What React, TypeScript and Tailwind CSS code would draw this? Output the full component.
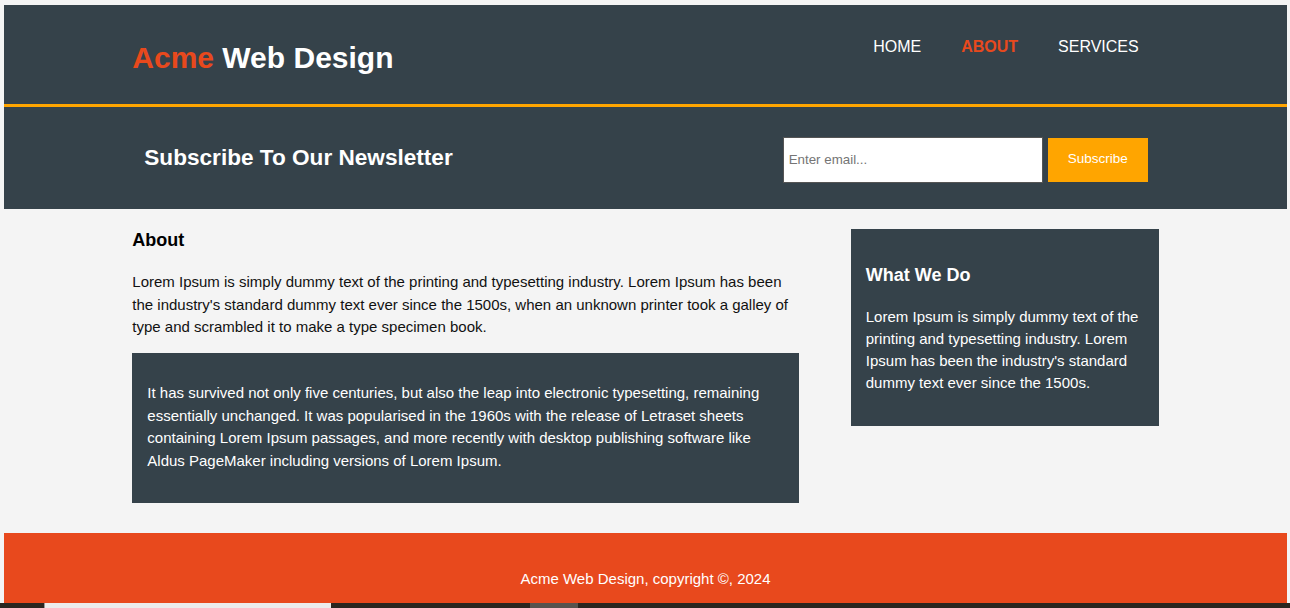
import React from "react";

const navItems = [
  { label: "HOME", active: false },
  { label: "ABOUT", active: true },
  { label: "SERVICES", active: false },
];

const App: React.FC = () => {
  return (
    <div className="h-[608px] w-full overflow-hidden bg-[#f4f4f4] flex flex-col font-['Liberation_Sans',Arial,sans-serif]">
      <div className="flex-1 flex flex-col ml-[4px] mr-[3px] mt-[5px]">
        {/* header */}
        <header className="h-[102px] shrink-0 bg-[#35424a] border-b-[3px] border-[#ffa500]">
          <div className="w-[80%] mx-auto flex justify-between items-start">
            <h1 className="mt-[35px] text-[30px] font-bold leading-[35px] text-white">
              <span className="text-[#e8491d]">Acme</span> Web Design
            </h1>
            <nav className="mt-[33px] flex">
              {navItems.map((item) => (
                <a
                  key={item.label}
                  href="#"
                  className={
                    item.active
                      ? "px-[20px] text-[16px] leading-[18px] font-bold text-[#e8491d]"
                      : "px-[20px] text-[16px] leading-[18px] text-white"
                  }
                >
                  {item.label}
                </a>
              ))}
            </nav>
          </div>
        </header>

        {/* newsletter */}
        <section className="h-[102px] shrink-0 bg-[#35424a]">
          <div className="w-[80%] h-full mx-auto pl-[12px] pr-[11px] flex justify-between items-center">
            <h2 className="text-[22.6px] font-bold leading-[28px] text-white">
              Subscribe To Our Newsletter
            </h2>
            <form className="flex items-center mt-[3px]">
              <input
                type="email"
                placeholder="Enter email..."
                className="w-[260px] h-[46px] bg-white border border-[#555] px-[5px] text-[13.33px] text-black placeholder:text-[#757575] outline-none"
              />
              <button
                type="button"
                className="ml-[5px] w-[100px] h-[44px] bg-[#ffa500] text-white text-[13.5px]"
              >
                Subscribe
              </button>
            </form>
          </div>
        </section>

        {/* main */}
        <div className="w-[80%] mx-auto flex justify-between shrink-0">
          <main className="w-[65%]">
            <h3 className="mt-[20px] text-[18px] font-bold leading-[22px] text-black">About</h3>
            <p className="mt-[20px] text-[15px] leading-[22.5px] text-[#111]">
              Lorem Ipsum is simply dummy text of the printing and typesetting industry. Lorem
              Ipsum has been the industry's standard dummy text ever since the 1500s, when an
              unknown printer took a galley of type and scrambled it to make a type specimen book.
            </p>
            <div className="mt-[14.5px] bg-[#35424a] px-[15px] pt-[29px] pb-[31px] text-white">
              <p className="text-[15px] leading-[22.5px]">
                It has survived not only five centuries, but also the leap into electronic
                typesetting, remaining essentially unchanged. It was popularised in the 1960s with
                the release of Letraset sheets containing Lorem Ipsum passages, and more recently
                with desktop publishing software like Aldus PageMaker including versions of Lorem
                Ipsum.
              </p>
            </div>
          </main>

          <aside className="w-[30%] self-start mt-[20px] bg-[#35424a] px-[15px] pt-[35px] pb-[32px] text-white">
            <h3 className="text-[18px] font-bold leading-[22px]">What We Do</h3>
            <p className="mt-[20px] text-[15px] leading-[22px]">
              Lorem Ipsum is simply dummy text of the printing and typesetting industry. Lorem
              Ipsum has been the industry's standard dummy text ever since the 1500s.
            </p>
          </aside>
        </div>

        {/* footer */}
        <footer className="mt-[30px] h-[70px] shrink-0 bg-[#e8491d] pt-[35px] text-center text-white text-[15px] leading-[22px]">
          <p>Acme Web Design, copyright ©, 2024</p>
        </footer>
      </div>

      {/* bottom strip */}
      <div className="h-[5px] shrink-0 bg-[#2a2620] flex">
        <div className="ml-[44px] w-[287px] bg-[#ececec] border-l border-[#999]" />
        <div className="ml-[199px] w-[48px] bg-[#57534e]" />
      </div>
    </div>
  );
};

export default App;
